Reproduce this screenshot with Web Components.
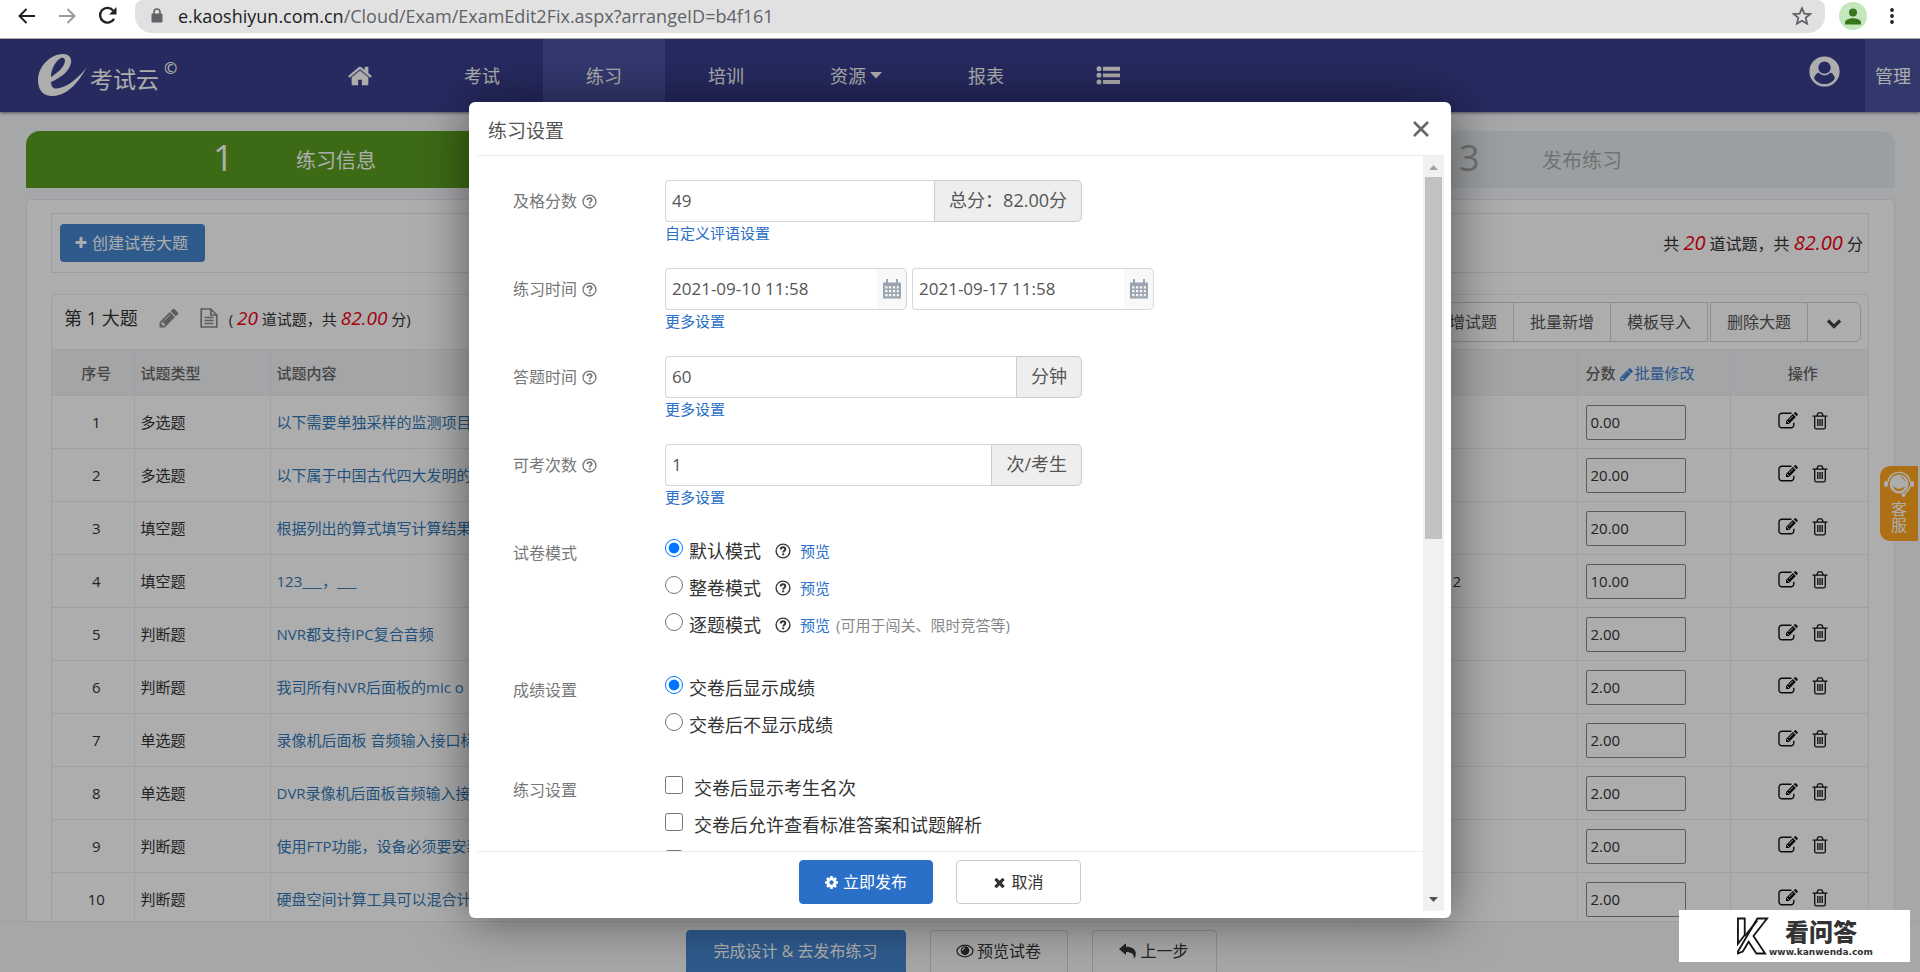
<!DOCTYPE html>
<html lang="zh-CN">
<head>
<meta charset="utf-8">
<title>练习设置</title>
<style>
html,body{margin:0;height:100%}
body{overflow:hidden;font-family:"Open Sans","Noto Sans CJK SC",sans-serif;font-size:16px;line-height:24px;color:#333}
</style>
</head>
<body>
<exam-app></exam-app>
<script>
const define = (name, css, html, setup) => {
  const tpl = document.createElement('template');
  tpl.innerHTML = `<style>*{box-sizing:border-box}button,input{font:inherit;color:inherit;margin:0}a{text-decoration:none;color:inherit}${css}</style>${html}`;
  customElements.define(name, class extends HTMLElement {
    constructor() {
      super();
      this.attachShadow({mode: 'open'}).append(tpl.content.cloneNode(true));
    }
    connectedCallback() { if (setup && !this.ready) { this.ready = true; setup(this, this.shadowRoot); } }
  });
};

/* ---------- icons ---------- */
const FA = '0 0 1792 1792';
const ICONS = {
  plus: [FA, '<path d="M1600 736v192q0 40-28 68t-68 28h-416v416q0 40-28 68t-68 28h-192q-40 0-68-28t-28-68v-416h-416q-40 0-68-28t-28-68v-192q0-40 28-68t68-28h416v-416q0-40 28-68t68-28h192q40 0 68 28t28 68v416h416q40 0 68 28t28 68z"/>'],
  times: [FA, '<path d="M1490 1322q0 40-28 68l-136 136q-28 28-68 28t-68-28l-294-294-294 294q-28 28-68 28t-68-28l-136-136q-28-28-28-68t28-68l294-294-294-294q-28-28-28-68t28-68l136-136q28-28 68-28t68 28l294 294 294-294q28-28 68-28t68 28l136 136q28 28 28 68t-28 68l-294 294 294 294q28 28 28 68z"/>'],
  home: [FA, '<path d="M1472 992v480q0 26-19 45t-45 19h-384v-384h-256v384h-384q-26 0-45-19t-19-45v-480q0-1 .5-3t.5-3l575-474 575 474q1 2 1 6zm223-69l-62 74q-8 9-21 11h-3q-13 0-21-7l-692-577-692 577q-12 8-24 7-13-2-21-11l-62-74q-8-10-7-23.5t11-21.5l719-599q32-26 76-26t76 26l244 204v-195q0-14 9-23t23-9h192q14 0 23 9t9 23v408l219 182q10 8 11 21.5t-7 23.5z"/>'],
  pencil: [FA, '<path d="M491 1536l91-91-235-235-91 91v107h128v128h107zm523-928q0-22-22-22-10 0-17 7l-542 542q-7 7-7 17 0 22 22 22 10 0 17-7l542-542q7-7 7-17zm-54-192l416 416-832 832h-416v-416zm683 96q0 53-37 90l-166 166-416-416 166-165q36-38 90-38 53 0 91 38l235 234q37 39 37 91z"/>'],
  cog: [FA, '<path d="M1152 896q0-106-75-181t-181-75-181 75-75 181 75 181 181 75 181-75 75-181zm512-109v222q0 12-8 23t-20 13l-185 28q-19 54-39 91 35 50 107 138 10 12 10 25t-9 23q-27 37-99 108t-94 71q-12 0-26-9l-138-108q-44 23-91 38-16 136-29 186-7 28-36 28h-222q-14 0-24.5-8.5t-11.5-21.5l-28-184q-49-16-90-37l-141 107q-10 9-25 9-14 0-25-11-126-114-165-168-7-10-7-23 0-12 8-23 15-21 51-66.5t54-70.5q-27-50-41-99l-183-27q-13-2-21-12.5t-8-23.5v-222q0-12 8-23t19-13l186-28q14-46 39-92-40-57-107-138-10-12-10-24 0-10 9-23 26-36 98.5-107.5t94.5-71.5q13 0 26 10l138 107q44-23 91-38 16-136 29-186 7-28 36-28h222q14 0 24.5 8.5t11.5 21.5l28 184q49 16 90 37l142-107q9-9 24-9 13 0 25 10 129 119 165 170 7 8 7 22 0 12-8 23-15 21-51 66.5t-54 70.5q26 50 41 98l183 28q13 2 21 12.5t8 23.5z"/>'],
  help: ['0 0 16 16', '<circle cx="8" cy="8" r="6.900" fill="none" stroke="currentColor" stroke-width="1.400"/><path d="M5.700 6.500C5.800 5 6.800 4.300 8 4.300c1.300 0 2.300.8 2.300 2C10.300 7.800 8.300 7.900 8.200 9.500" fill="none" stroke="currentColor" stroke-width="1.900"/><rect x="7.200" y="10.400" width="2" height="1.900"/>'],
  doc: ['0 0 18 20', '<path d="M1.200 1h9.600l6 6v12H1.200zM10.800 1v6h6M4.500 9.500h9M4.500 12.500h9M4.500 15.500h9" fill="none" stroke="currentColor" stroke-width="1.700"/>'],
  edit: ['0 0 20 17', '<path d="M13.500 1.200H4A2.900 2.900 0 0 0 1 4.200v8.600a2.900 2.900 0 0 0 3 3h8.800a2.900 2.900 0 0 0 3-3v-2" fill="none" stroke="currentColor" stroke-width="1.400"/><path d="M8 8.900 14.800 2l3 3L11 12H8zM15.700 1.200l.8-.8q.8-.7 1.600 0l1.300 1.300q.8.800 0 1.600l-.8.900z"/><path d="m9 9 2 2M10.800 8l4-4" stroke="#fff" stroke-width=".8"/>'],
  trash: ['0 0 16 18', '<path d="M2.700 4.800v10.500q0 1.500 1.300 1.500h8q1.300 0 1.300-1.500V4.800M.5 4.200h15M4.800 4l1-2.500q.2-.6.800-.6h2.800q.6 0 .8.600l1 2.500M5.800 7v7M8 7v7M10.200 7v7" fill="none" stroke="currentColor" stroke-width="1.300"/>'],
  chevron: ['0 0 16 12', '<path d="m2 2.500 6 6 6-6" fill="none" stroke="currentColor" stroke-width="3.200"/>'],
  caret: ['0 0 12 7', '<path d="M0 0h12L6 6.500z"/>'],
  list: ['0 0 24 19', '<circle cx="3" cy="2.700" r="2.500"/><circle cx="3" cy="9.300" r="2.500"/><circle cx="3" cy="16" r="2.500"/><path d="M7 .8h17v3.900H7zM7 7.400h17v3.900H7zM7 14h17v3.900H7z"/>'],
  user: ['0 0 32 32', '<circle cx="16" cy="16" r="14.300" fill="none" stroke="currentColor" stroke-width="2.600"/><circle cx="16" cy="12" r="7.200" fill="none" stroke="currentColor" stroke-width="1.600"/><path fill-rule="evenodd" d="M16 2a14 14 0 0 1 14 14c0 3-1 6-2.800 8.500-.8-3.500-2.300-7-6-7.500A7.200 7.200 0 1 0 10.800 17c-3.700.5-5.200 4-6 7.500A14 14 0 0 1 16 2z"/>'],
  close: ['0 0 16 16', '<path d="M1 1l14 14M15 1 1 15" fill="none" stroke="currentColor" stroke-width="2.600"/>'],
  calendar: ['0 0 18 20', '<path fill-rule="evenodd" d="M0 3.500h3V0h2v3.500h8V0h2v3.500h3V19.500H0zM2.200 7.300v2.200h2.300V7.300zm3.800 0v2.200h2.300V7.300zm3.900 0v2.200h2.300V7.300zm3.900 0v2.200h2.100V7.300zM2.200 11.100v2.200h2.300v-2.200zm3.800 0v2.200h2.300v-2.200zm3.900 0v2.200h2.300v-2.200zm3.900 0v2.200h2.100v-2.200zM2.200 15v2.300h2.300V15zM6 15v2.300h2.300V15zm3.900 0v2.300h2.300V15zm3.900 0v2.300h2.100V15z"/>'],
  eye: ['0 0 18 14', '<ellipse cx="9" cy="7" rx="8" ry="5.800" fill="none" stroke="currentColor" stroke-width="1.200"/><circle cx="9" cy="6.600" r="4.300"/><path d="M6.500 6.500Q6.700 4.200 9 4" fill="none" stroke="#fff" stroke-width="1.200"/>'],
  reply: ['0 0 18 16', '<path d="M0 6 7 .3v3.400c6 0 9.800 2 9.800 7.300 0 1.800-.8 3.600-1.800 4.700.2-4.700-2.500-6.700-8-6.700v3z"/>'],
  back: ['0 0 18 16', '<path d="M17 8H2M8.500 1 1.500 8l7 7" fill="none" stroke="currentColor" stroke-width="2"/>'],
  forward: ['0 0 18 16', '<path d="M1 8h15M9.500 1l7 7-7 7" fill="none" stroke="currentColor" stroke-width="2"/>'],
  reload: ['0 0 18 18', '<path d="M15.200 12A7 7 0 1 1 14.300 4.200" fill="none" stroke="currentColor" stroke-width="2.200"/><path d="M17.500 1v7h-7z"/>'],
  lock: ['0 0 12 15', '<path d="M3 6V4a3 3 0 0 1 6 0v2" fill="none" stroke="currentColor" stroke-width="1.600"/><rect x=".5" y="5.500" width="11" height="9" rx="1"/>'],
  star: ['0 0 18 18', '<path d="m9 2 2.100 4.900 5.200.4-4 3.400 1.300 5.200L9 13.200l-4.600 2.700 1.300-5.200-4-3.400 5.200-.4z" fill="none" stroke="currentColor" stroke-width="1.600"/>'],
  avatar: ['0 0 28 28', '<circle cx="14" cy="14" r="14" fill="#c5e7bd"/><circle cx="14" cy="10.500" r="4" fill="#38761d"/><path d="M6 22.500v-2.300c0-2.700 5.300-4 8-4s8 1.300 8 4v2.300z" fill="#38761d"/>'],
  dots: ['0 0 4 16', '<circle cx="2" cy="2" r="1.900"/><circle cx="2" cy="8" r="1.900"/><circle cx="2" cy="14" r="1.900"/>'],
  brand: ['0 0 50 42', '<path fill-rule="evenodd" d="M50 13C42 27 32 41 16 42 6 42.500 1 36 1 26 1 13 13 0 26 0c6 0 9 4 8 9-2 9-11 15-20 19 0 4 2 7 6 6.500C32 33 43 22 50 13zM14 23c6-4 13-9 14-16 0-3-2-4-4-3-6 3-10 12-10 19z"/>'],
  agent: ['0 0 30 26', '<circle cx="15" cy="13" r="9.500"/><path d="M4 11C6-2 24-2 26 11M26 15c-1 4-3 6-6 8" fill="none" stroke="currentColor" stroke-width="1.500"/><rect x="0" y="10" width="4" height="6" rx="2"/><rect x="26" y="10" width="4" height="6" rx="2"/><path d="M9 15q6 6 12 0-1 5-6 5t-6-5z" fill="#ffa61f"/><path d="M17 6q3 1 4 4" fill="none" stroke="#ffa61f"/><circle cx="19.500" cy="24" r="2"/>'],
  kmark: ['0 0 34 40', '<g fill="#fff" stroke="#151515" stroke-width="1.900"><path d="M2 2h7v17L2 28z"/><path d="M2 36 22 2h10L18 20l12 18h-9l-8-12-6 10-5 2z"/><path d="M9 20 22 4"/></g>']
};
define('ui-icon', ':host{display:inline-block;flex:none;line-height:0;vertical-align:middle}div{height:100%}svg{display:block;width:100%;height:100%;fill:currentColor}', '<div></div>', (host, root) => {
  const [box, body] = ICONS[host.getAttribute('name')];
  root.querySelector('div').innerHTML = `<svg viewBox="${box}" aria-hidden="true">${body}</svg>`;
});

/* ---------- browser bar ---------- */
define('browser-bar', `
:host{display:flex;align-items:flex-start;height:39px;background:#fff;border-bottom:1px solid #a9aba0;overflow:hidden;color:#202124}
button{border:0;background:none;padding:0;height:31px;display:flex;align-items:center;justify-content:center}
.nav{flex:none;display:flex;gap:22px;padding-left:18px;width:135px}
.nav ui-icon{width:18px;height:16px}
.nav .reload{height:19px;width:19px}
.off{color:#9a9a9a}
.pill{flex:1;display:flex;align-items:center;height:33px;background:#e1e1e1;border-radius:8px 8px 17px 17px;padding:0 13px 2px 16px;gap:15px;font-size:18px;color:#5f6368}
.pill a{flex:1}
.pill b{font-weight:400;color:#202124}
.lock{width:12px;height:15px}.star{width:20px;height:20px}
.end{display:flex;gap:23px;padding:0 26px 0 14px}
.avatar{width:28px;height:28px}.dots{width:4px;height:16px}
`, `
<div class="nav"><button aria-label="后退"><ui-icon name="back"></ui-icon></button><button class="off" aria-label="前进"><ui-icon name="forward"></ui-icon></button><button aria-label="刷新"><ui-icon class="reload" name="reload"></ui-icon></button></div>
<div class="pill"><ui-icon class="lock" name="lock"></ui-icon><a href="#"><b>e.kaoshiyun.com.cn</b>/Cloud/Exam/ExamEdit2Fix.aspx?arrangeID=b4f161</a><button aria-label="收藏"><ui-icon class="star" name="star"></ui-icon></button></div>
<div class="end"><button aria-label="用户"><ui-icon class="avatar" name="avatar"></ui-icon></button><button aria-label="菜单"><ui-icon class="dots" name="dots"></ui-icon></button></div>`);

/* ---------- site navigation ---------- */
define('site-nav', `
:host{display:flex;height:73px;background:#383f8c;color:#fff;font-size:18px;box-shadow:0 1px 3px rgba(0,0,0,.5);position:relative}
.logo{width:299px;padding:0 0 1px 37px;display:flex;align-items:center;font-size:23px}
.logo ui-icon{width:50px;height:42px}
.logo span{padding:7px 0 0 3px}
.logo sup{font-size:16px;font-weight:600;line-height:16px;align-self:flex-start;padding:21px 0 0 5px}
nav{display:flex;flex:1}
nav a{min-width:122px;padding:0 43px;display:flex;align-items:center;justify-content:center;gap:4px}
nav a.on{background:#4c55a4}
.home{width:26px;height:26px}.list{width:24px;height:19px}.caret{width:12px;height:7px}
.user{width:31px;height:31px;align-self:center;margin:0 25px 8px 0}
.admin{background:#4a51a0;padding:0 9px 0 10px;display:flex;align-items:center}
`, `
<div class="logo"><ui-icon name="brand"></ui-icon><span>考试云</span><sup>©</sup></div>
<nav><a href="#" aria-label="首页"><ui-icon class="home" name="home"></ui-icon></a><a href="#">考试</a><a href="#" class="on">练习</a><a href="#">培训</a><a href="#">资源<ui-icon class="caret" name="caret"></ui-icon></a><a href="#">报表</a><a href="#" aria-label="更多"><ui-icon class="list" name="list"></ui-icon></a></nav>
<ui-icon class="user" name="user"></ui-icon><a href="#" class="admin">管理</a>`);

/* ---------- step bar ---------- */
define('step-bar', `
:host{display:grid;grid-template-columns:repeat(3,1fr);height:57px;border-radius:14px 14px 0 0;overflow:hidden;background:#e6ebee;color:#a9a9a9}
div{display:flex;align-items:center;padding:2px 0 0 187px;font-size:20px;gap:63px}
b{font-weight:400;font-size:36px;line-height:44px;width:20px;padding-bottom:6px}
.on{background:#5b9d20;color:#fff}
`, `<div class="on"><b>1</b>练习信息</div><div><b>2</b>设计试卷</div><div><b>3</b>发布练习</div>`);

/* ---------- question list ---------- */
const QUESTIONS = [
  ['多选题', '以下需要单独采样的监测项目', '0.00'], ['多选题', '以下属于中国古代四大发明的', '20.00'],
  ['填空题', '根据列出的算式填写计算结果', '20.00'], ['填空题', '123___，___', '10.00', '2'],
  ['判断题', 'NVR都支持IPC复合音频', '2.00'], ['判断题', '我司所有NVR后面板的mic o', '2.00'],
  ['单选题', '录像机后面板 音频输入接口标', '2.00'], ['单选题', 'DVR录像机后面板音频输入接', '2.00'],
  ['判断题', '使用FTP功能，设备必须要安装', '2.00'], ['判断题', '硬盘空间计算工具可以混合计', '2.00']
];
define('question-list', `
:host{display:block;border:1px solid #ececf4;border-radius:4px 4px 0 0}
.head{height:54px;display:flex;align-items:center;padding:0 7px 0 12px}
.info{flex:1;display:flex;align-items:center;padding-bottom:9px}
.title{font-size:18px}
.pen{width:22px;height:22px;margin:0 20px;color:#888}
.doc{width:18px;height:20px;margin-right:11px;color:#888}
.sum{font-size:15px;padding-top:2px}
em{color:#f00014;font-size:19px}
.group{display:flex;margin-left:3px}
.group button{height:40px;border:1px solid #d2d2d2;background:#fff;padding:0 16px;margin-left:-1px;color:#555}
.group:last-child button:last-child{border-radius:0 6px 6px 0;padding:0 18px}
.chev{width:16px;height:12px;color:#444}
table{width:100%;border-collapse:collapse;table-layout:fixed;font-size:15px}
th,td{border:1px solid #ececf2;padding:0 7px 0 6px;text-align:left;height:53px;white-space:nowrap;overflow:hidden}
tr>:first-child{border-left:0;text-align:center;padding:0 0 0 7px}
tr>:last-child{border-right:0;text-align:center;padding:0 0 0 7px}
tr>:nth-child(4){padding-left:93px}
tr>:nth-child(5){padding-left:8px}
th{background:#f1f3f6;color:#666;font-weight:500;height:46px}
td a,th a{color:#337ab7}
th a{color:#3f7fd0;font-weight:400}
th ui-icon{width:15px;height:15px}
td input{width:100px;height:35px;border:1px solid #888;border-radius:2px;background:#fff;padding:0 4px;display:block}
.ops{display:flex;justify-content:center;gap:14px;padding-bottom:3px}
.ops button{border:0;background:none;padding:0;line-height:0;color:#111}
.e{width:20px;height:17px}.t{width:16px;height:18px}
`, `
<div class="head"><div class="info"><span class="title">第 1 大题</span><ui-icon class="pen" name="pencil"></ui-icon><ui-icon class="doc" name="doc"></ui-icon><span class="sum">( <em>20</em> 道试题，共 <em>82.00</em> 分)</span></div>
<div class="group"><button>新增试题</button><button>批量新增</button><button>模板导入</button></div>
<div class="group"><button>删除大题</button><button aria-label="更多"><ui-icon class="chev" name="chevron"></ui-icon></button></div></div>
<table><colgroup><col style="width:82px"><col style="width:136px"><col><col style="width:218px"><col style="width:153px"><col style="width:138px"></colgroup>
<thead><tr><th>序号</th><th>试题类型</th><th>试题内容</th><th></th><th>分数 <a href="#"><ui-icon name="pencil"></ui-icon>批量修改</a></th><th>操作</th></tr></thead><tbody></tbody></table>`,
(host, root) => {
  root.querySelector('tbody').innerHTML = QUESTIONS.map(([type, text, score, answer = ''], i) => `
<tr><td>${i + 1}</td><td>${type}</td><td><a href="#">${text}</a></td><td>${answer}</td><td><input type="text" aria-label="第${i + 1}题分数" value="${score}"></td><td><div class="ops"><button aria-label="编辑"><ui-icon class="e" name="edit"></ui-icon></button><button aria-label="删除"><ui-icon class="t" name="trash"></ui-icon></button></div></td></tr>`).join('');
});

/* ---------- paper page ---------- */
define('paper-page', `
:host{display:flex;flex-direction:column;min-height:0;padding:19px 25px 0 26px;background:#f5f6fa;overflow:hidden}
step-bar{flex:none}
.panel{flex:1;min-height:0;overflow:hidden;margin-top:11px;border:1px solid #e6e7ee;border-bottom:0;border-radius:5px 5px 0 0;background:#fff;padding:13px 25px 0 24px}
.tools{height:60px;border:1px solid #e6e7ee;display:flex;align-items:center;justify-content:space-between;padding:0 5px 0 8px;margin-bottom:21px}
.tools button{height:38px;border:0;border-radius:4px;background:#4485cf;color:#fff;padding:0 17px 0 14px;display:flex;align-items:center;gap:4px}
.tools ui-icon{width:14px;height:14px}
em{color:#f00014;font-size:20px}
`, `<step-bar></step-bar>
<div class="panel"><div class="tools"><button><ui-icon name="plus"></ui-icon>创建试卷大题</button><span>共 <em>20</em> 道试题，共 <em>82.00</em> 分</span></div><question-list></question-list></div>`);

define('action-bar', `
:host{display:flex;justify-content:center;align-items:flex-start;gap:24px;height:51px;overflow:hidden;background:#f7f7f7;border-top:1px solid #ebebf0;padding:8px 18px 0 0}
button{height:46px;border:1px solid #d0d0d0;border-radius:4px;background:#f7f7f7;width:125px;display:flex;align-items:center;justify-content:center;gap:3px;padding:0 0 4px}
.main{background:#4485cf;border-color:#4485cf;color:#fff;width:220px}
.mid{width:138px}
ui-icon{width:18px;height:16px}
`, `<button class="main">完成设计 &amp; 去发布练习</button><button class="mid"><ui-icon name="eye"></ui-icon>预览试卷</button><button><ui-icon name="reply"></ui-icon>上一步</button>`);

define('service-tab', `
:host{position:absolute;right:2px;top:427px}
button{width:38px;height:75px;border:0;border-radius:10px 0 0 10px;background:#ffa61f;color:#fff;padding:5px 0 0;display:flex;flex-direction:column;align-items:center;line-height:16px;gap:4px}
span{width:16px}
ui-icon{width:30px;height:26px}
`, `<button><ui-icon name="agent"></ui-icon><span>客服</span></button>`);

/* ---------- settings dialog ---------- */
define('form-row', `
:host{display:grid;grid-template-columns:152px 1fr;margin-bottom:24px}
.label{display:flex;align-items:center;gap:5px;height:42px;color:#777}
.label ui-icon{width:15px;height:15px}
`, `<div class="label"><slot name="label"></slot></div><div><slot></slot></div>`, (host, root) => {
  if (host.hasAttribute('help')) root.querySelector('.label').insertAdjacentHTML('beforeend', '<ui-icon name="help"></ui-icon>');
});

define('settings-dialog', `
:host{display:flex;flex-direction:column;width:982px;max-width:96%;background:#fff;border-radius:6px;box-shadow:1px 1px 50px rgba(0,0,0,.5);padding:0 7px 7px}
header{flex:none;height:54px;border-bottom:1px solid #eee;display:flex;align-items:center;justify-content:space-between;padding:2px 15px 0 12px;color:#555}
h1{margin:0;font-size:19px;font-weight:400;line-height:28px;padding-top:2px}
header button{border:0;background:none;padding:0 0 2px;line-height:0;color:#666}
header ui-icon{width:16px;height:16px}
.body{flex:1;min-height:0;display:grid;grid-template-columns:1fr 21px}
.left{display:flex;flex-direction:column;min-height:0}
form{flex:1;min-height:0;overflow:hidden;padding:24px 37px 0}
.ctl{display:flex;width:417px;height:42px;font-size:17px;color:#555}
.ctl input{flex:1;min-width:0;border:1px solid #d6d6d6;border-right:0;border-radius:4px 0 0 4px;padding:0 6px;background:#fff;outline:0}
.ctl span{border:1px solid #ccc;border-radius:0 5px 5px 0;background:#eee;padding:0 14px;line-height:38px;font-size:18px;white-space:nowrap}
.dates{display:flex;gap:5px}
.dates .ctl{width:242px}
.ctl button{width:30px;border:1px solid #d6d6d6;border-left:0;border-radius:0 5px 5px 0;background:#f8f8f8;color:#9aa5af;padding:0;line-height:0}
.ctl button ui-icon{width:18px;height:20px}
a{color:#2a70c8;font-size:15px;line-height:22px}
.more{display:block}
.opts{padding-bottom:2px}
.opt{display:flex;align-items:center;height:37px;font-size:18px}
.opt input{width:18px;height:18px;margin:0 6px 6px 0;accent-color:#0075ff}
.opt [type=checkbox]{margin-right:11px}
.opt ui-icon{width:16px;height:16px;margin:0 9px 0 14px}
.opt small{font-size:15px;color:#888;margin-left:6px}
footer{flex:none;height:60px;border-top:1px solid #eee;padding:8px 20px 0 0;display:flex;justify-content:center;gap:23px}
footer button{height:44px;width:125px;border:1px solid #ccc;border-radius:4px;background:#fff;display:flex;align-items:center;justify-content:center;gap:4px}
footer .go{width:134px;background:#2a70c8;border-color:#2a70c8;color:#fff}
footer ui-icon{width:15px;height:15px}
.bar{background:#f1f1f1;display:flex;flex-direction:column;align-items:center}
.bar i{width:9px;height:5px;margin:9px 0 7px;background:#a3a3a3;clip-path:polygon(50% 0,100% 100%,0 100%)}
.bar i:last-child{background:#505050;clip-path:polygon(0 0,100% 0,50% 100%);margin:auto 0 9px}
.thumb{width:17px;height:48%;background:#c1c1c1}
`, `
<header><h1>练习设置</h1><button aria-label="关闭"><ui-icon name="close"></ui-icon></button></header>
<div class="body"><div class="left"><form>
<form-row help><label slot="label" for="pass">及格分数</label><div class="ctl"><input id="pass" type="text" value="49"><span>总分：82.00分</span></div><a class="more" href="#">自定义评语设置</a></form-row>
<form-row help><label slot="label" for="from">练习时间</label><div class="dates"><div class="ctl"><input id="from" type="text" value="2021-09-10 11:58"><button type="button" aria-label="选择开始时间"><ui-icon name="calendar"></ui-icon></button></div><div class="ctl"><input aria-label="结束时间" type="text" value="2021-09-17 11:58"><button type="button" aria-label="选择结束时间"><ui-icon name="calendar"></ui-icon></button></div></div><a class="more" href="#">更多设置</a></form-row>
<form-row help><label slot="label" for="dur">答题时间</label><div class="ctl"><input id="dur" type="text" value="60"><span>分钟</span></div><a class="more" href="#">更多设置</a></form-row>
<form-row help><label slot="label" for="times">可考次数</label><div class="ctl"><input id="times" type="text" value="1"><span>次/考生</span></div><a class="more" href="#">更多设置</a></form-row>
<form-row><span slot="label">试卷模式</span><div class="opts">
<div class="opt"><input type="radio" name="mode" id="m1" checked><label for="m1">默认模式</label><ui-icon name="help"></ui-icon><a href="#">预览</a></div>
<div class="opt"><input type="radio" name="mode" id="m2"><label for="m2">整卷模式</label><ui-icon name="help"></ui-icon><a href="#">预览</a></div>
<div class="opt"><input type="radio" name="mode" id="m3"><label for="m3">逐题模式</label><ui-icon name="help"></ui-icon><a href="#">预览</a><small>(可用于闯关、限时竞答等)</small></div></div></form-row>
<form-row><span slot="label">成绩设置</span><div class="opts">
<div class="opt"><input type="radio" name="score" id="s1" checked><label for="s1">交卷后显示成绩</label></div>
<div class="opt"><input type="radio" name="score" id="s2"><label for="s2">交卷后不显示成绩</label></div></div></form-row>
<form-row><span slot="label">练习设置</span><div class="opts">
<div class="opt"><input type="checkbox" id="c1"><label for="c1">交卷后显示考生名次</label></div>
<div class="opt"><input type="checkbox" id="c2"><label for="c2">交卷后允许查看标准答案和试题解析</label></div>
<div class="opt"><input type="checkbox" aria-label="其他设置"></div></div></form-row>
</form><footer><button class="go"><ui-icon name="cog"></ui-icon>立即发布</button><button><ui-icon name="times"></ui-icon>取消</button></footer></div>
<div class="bar" aria-hidden="true"><i></i><div class="thumb"></div><i></i></div></div>`);

/* ---------- site badge ---------- */
define('site-badge', `
:host{position:absolute;right:10px;bottom:10px;width:231px;height:52px;background:#fff;color:#333;display:flex;align-items:center;padding-left:57px}
ui-icon{width:33px;height:40px}
div{display:flex;flex-direction:column;align-items:center;z-index:1;padding-top:4px}
b{font-size:24px;line-height:28px;font-weight:900}
small{font:bold 9px/12px "DejaVu Sans",sans-serif}
`, `<ui-icon name="kmark"></ui-icon><div><b>看问答</b><small>www.kanwenda.com</small></div>`);

/* ---------- shell ---------- */
define('exam-app', `
:host{display:flex;flex-direction:column;height:100vh;overflow:hidden}
browser-bar{flex:none}
main{flex:1;min-height:0;position:relative;display:flex;flex-direction:column;overflow:hidden}
site-nav,action-bar{flex:none}
paper-page{flex:1}
.mask{position:absolute;inset:0;background:rgba(0,0,0,.32);display:flex;justify-content:center;padding:63px 0 54px}
`, `<browser-bar></browser-bar><main><site-nav></site-nav><paper-page></paper-page><action-bar></action-bar><service-tab></service-tab>
<div class="mask"><settings-dialog role="dialog" aria-label="练习设置"></settings-dialog></div><site-badge></site-badge></main>`);
</script>
</body>
</html>
